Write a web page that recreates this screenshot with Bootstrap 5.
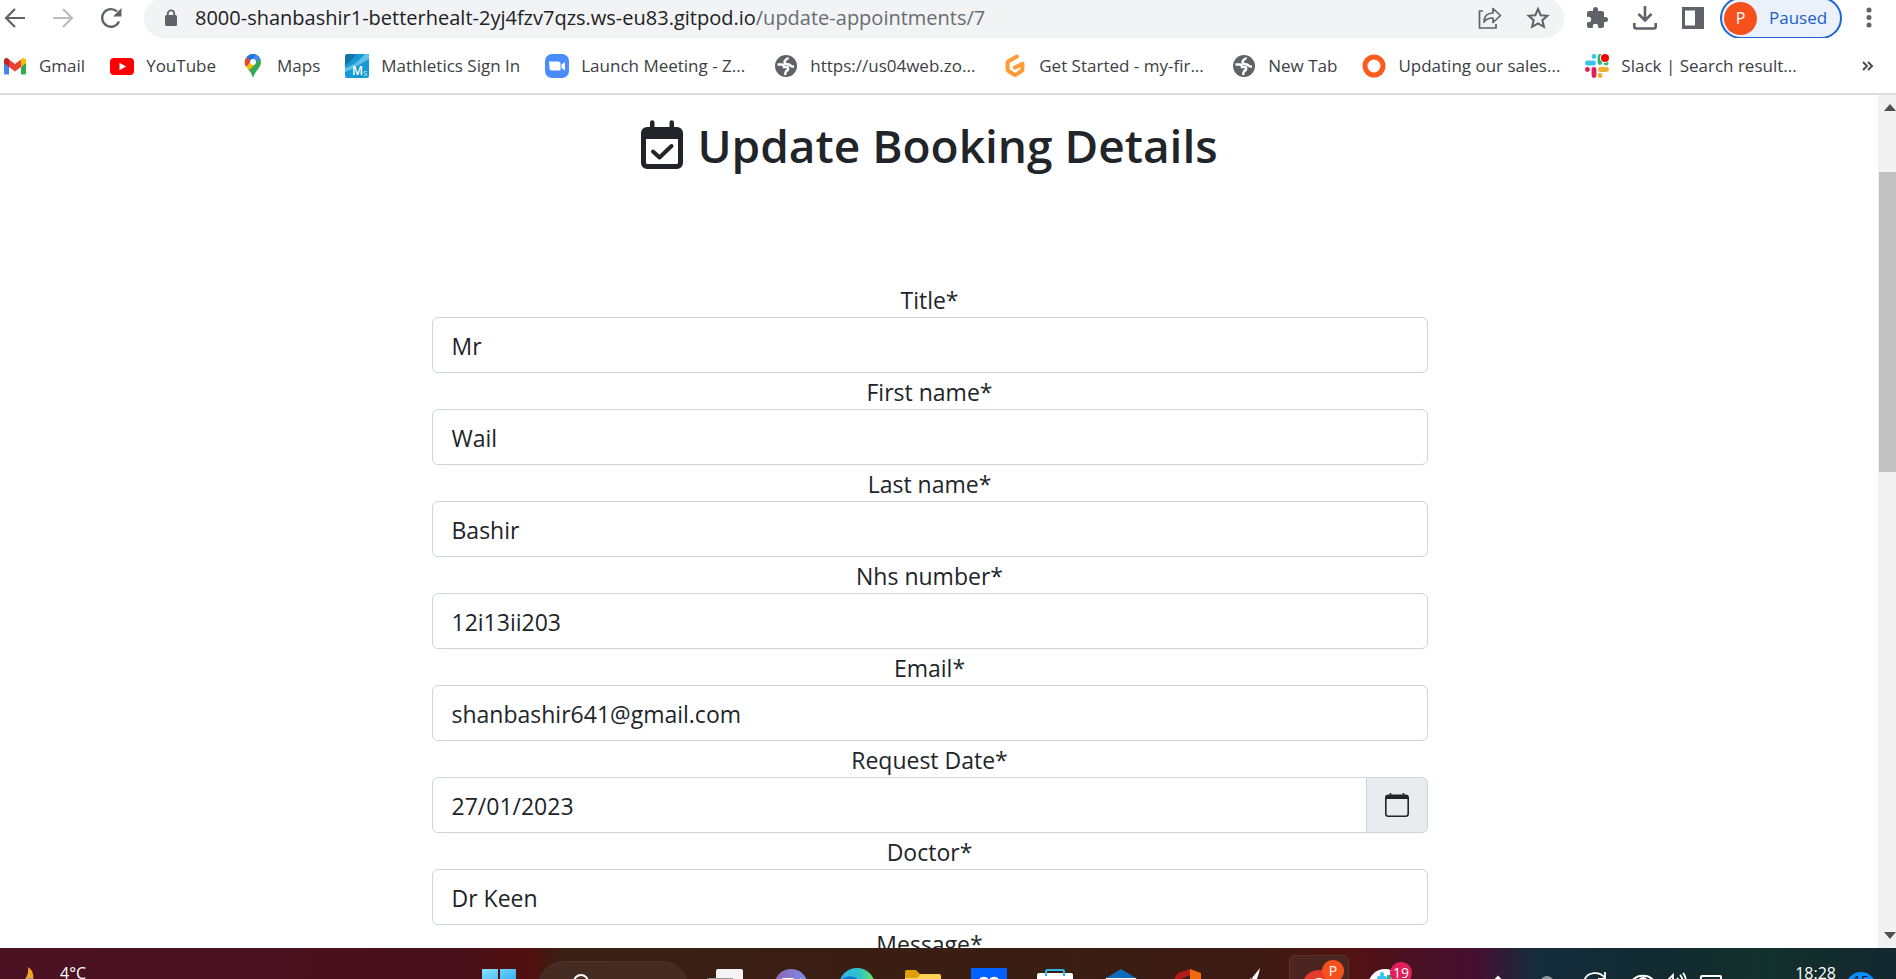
<!DOCTYPE html>
<html lang="en">
<head>
<meta charset="utf-8">
<meta name="viewport" content="width=device-width, initial-scale=1">
<title>Update Booking Details</title>
<link href="https://cdn.jsdelivr.net/npm/bootstrap@5.3.0/dist/css/bootstrap.min.css" rel="stylesheet">
<style>
  body { font-family: "Open Sans", "Noto Sans", sans-serif; color: #212529; background: #fff; }
  svg { display: block; flex: none; overflow: visible; }
  .icon-btn { border: 0; background: none; padding: 0; flex: none; color: #5f6368; }

  /* Browser toolbar, partly scrolled off the top edge */
  .toolbar { height: 38px; padding: 0 16px 0 3px; }
  .toolbar-row { height: 40px; }
  .nav-icons { gap: 24px; margin-right: 21px; }
  .omnibox { height: 40px; background: #f1f3f4; border-radius: 20px; padding: 0 14px 0 19px; font-size: 20px; }
  .omnibox .url { color: #202124; margin-left: 16px; white-space: nowrap; }
  .omnibox .url-path { color: #696c70; }
  .tool-icons { gap: 24px; margin: 0 15px 0 21px; }
  .profile { height: 42px; width: 122px; border: 2px solid #1b66d2; border-radius: 21px; background: #eaf1fb; color: #1a60c8; font-size: 17px; padding: 0 2px; }
  .profile-dot { width: 33px; height: 33px; border-radius: 50%; background: #f6511d; color: #fff; font-size: 16px; line-height: 33px; }

  .bookmarks { height: 55px; padding: 0 22px 0 3px; font-size: 17px; gap: 25px; }
  .bookmarks a { color: #3c4043; text-decoration: none; gap: 12px; white-space: nowrap; }
  .bookmarks .long-mark { min-width: 204px; }
  .divider { height: 2px; background: #dadce0; }

  /* Page area */
  .viewport { min-height: 0; }
  .page { padding-right: 19px; overflow: hidden; }
  .page h1 { font-size: 46px; font-weight: 600; line-height: 58px; margin: 21px 0 107px; gap: 14px; }
  .booking { width: 54%; max-width: 996px; margin: 0 auto; font-size: 23px; }
  .booking label { display: block; text-align: center; line-height: 34px; padding-top: 2px; }
  .booking .form-control { font-size: 23px; height: 56px; padding: 8px 19px 6px; border: 1px solid #ced4da; border-radius: 6px; color: #212529; }
  .booking .input-group-text { width: 62px; justify-content: center; background: #e9ecef; border: 1px solid #ced4da; border-radius: 6px; padding: 0; }

  .scroll { width: 18px; background: #f1f1f1; overflow: hidden; }
  .scroll-thumb { height: 300px; background: #c1c1c1; margin: 77px 0 auto 1px; }
  .scroll svg { position: absolute; left: 5px; }

  /* Taskbar */
  .taskbar { height: 31px; overflow: hidden; color: #fff; font-size: 16px;
    background: linear-gradient(90deg, #4a1222 0, #4a1220 15%, #47101a 24%, #521010 28%, #3a1f14 29.5%, #3a1e14 55%, #3d1b14 66%, #521312 71%, #48102a 76%, #451030 78%, #142c3b 81%, #122b30 88%, #12302b 93%, #142830 100%); }
  .side { flex: 1 0 0; }
  .weather { padding: 13px 0 0 8px; }
  .slot { width: 66px; padding-top: 20px; }
  .search-pill { width: 150px; height: 52px; margin: 13px 4px 0 6px; border: 1px solid #4d342a; background: #452c22; border-radius: 26px; color: #fff; padding: 11px 0 0 34px; font-size: 16px; gap: 9px; }
  .active-tile { width: 60px; height: 60px; margin: 7px 3px 0; padding-top: 13px; border-radius: 6px; background: #4b2520; border: 1px solid #583430; }
  .count { width: 22px; height: 22px; border-radius: 50%; line-height: 22px; text-align: center; font-size: 14px; position: absolute; }
  .count-profile { background: #f6511d; }
  .count-unread { background: #e01e5a; top: 14px; right: 6px; }
  .tray { padding: 24px 20px 0 0; }
  .clock { margin: -11px 10px 0 24px; line-height: 24px; }
  .notif { width: 30px; height: 30px; border-radius: 50%; background: #0a8dff; color: #04142a; text-align: center; font-size: 14px; line-height: 18px; }
</style>
</head>
<body class="vh-100 d-flex flex-column overflow-hidden">

<header>
  <div class="toolbar d-flex align-items-end overflow-hidden">
    <div class="toolbar-row d-flex align-items-center w-100">
      <div class="nav-icons d-flex">
        <button class="icon-btn" aria-label="Back"><svg width="24" height="24" viewBox="0 0 24 24" fill="none" stroke="#5f6368" stroke-width="2.2"><path d="M22 12H4M12 3l-9 9 9 9"/></svg></button>
        <button class="icon-btn" aria-label="Forward"><svg width="24" height="24" viewBox="0 0 24 24" fill="none" stroke="#babcbe" stroke-width="2.2"><path d="M2 12h18M12 3l9 9-9 9"/></svg></button>
        <button class="icon-btn" aria-label="Reload"><svg width="24" height="24" viewBox="0 0 24 24" fill="none" stroke="#5f6368" stroke-width="2.4"><path d="M20 15.500A8.800 8.800 0 1 1 18 5.500"/><path d="M22.500 2v8.500H14z" fill="#5f6368" stroke="none"/></svg></button>
      </div>
      <div class="omnibox d-flex align-items-center flex-grow-1">
        <svg width="16" height="18" viewBox="0 0 16 18"><rect x="2" y="6" width="12" height="11" rx="1.500" fill="#5f6368"/><path d="M4.800 7V4.600a3.200 3.200 0 0 1 6.400 0V7" fill="none" stroke="#5f6368" stroke-width="1.800"/></svg>
        <div class="url flex-grow-1" role="textbox" aria-label="Address">8000-shanbashir1-betterhealt-2yj4fzv7qzs.ws-eu83.gitpod.io<span class="url-path">/update-appointments/7</span></div>
        <div class="d-flex gap-4">
          <button class="icon-btn" aria-label="Share"><svg width="24" height="24" viewBox="0 0 24 24" fill="none" stroke="#5f6368" stroke-width="1.700"><path d="M5 5H1.500v17H18v-4"/><path d="M6 16c0-6 3-9 9-9V2.500l7.500 7-7.500 7V12c-4 0-7 1-9 4z" stroke-linejoin="round"/></svg></button>
          <button class="icon-btn" aria-label="Bookmark"><svg width="24" height="24" viewBox="0 0 24 24" fill="none" stroke="#5f6368" stroke-width="2"><path d="M12 3l2.700 6.200 6.700.6-5.100 4.400 1.600 6.600L12 17.300l-5.900 3.500 1.600-6.600L2.600 9.800l6.700-.6z"/></svg></button>
        </div>
      </div>
      <div class="tool-icons d-flex">
        <button class="icon-btn" aria-label="Extensions"><svg width="24" height="24" viewBox="0 0 24 24" fill="#5f6368"><path d="M20.500 11H19V7c0-1.100-.9-2-2-2h-4V3.500a2.500 2.500 0 0 0-5 0V5H4c-1.100 0-2 .9-2 2v3.800h1.500a2.700 2.700 0 0 1 0 5.400H2V20c0 1.100.9 2 2 2h3.800v-1.500a2.700 2.700 0 0 1 5.400 0V22H17c1.100 0 2-.9 2-2v-4h1.500a2.500 2.500 0 0 0 0-5z"/></svg></button>
        <button class="icon-btn" aria-label="Downloads"><svg width="24" height="24" viewBox="0 0 24 24" fill="none" stroke="#5f6368" stroke-width="2.600"><path d="M12 0v14M5.500 8l6.500 6.500L18.500 8M1.300 17v3.500a2 2 0 0 0 2 2h17.400a2 2 0 0 0 2-2V17"/></svg></button>
        <button class="icon-btn" aria-label="Side panel"><svg width="24" height="24" viewBox="0 0 24 24"><path fill="#5f6368" fill-rule="evenodd" d="M1 1h22v22H1zM4 4.500v15h10v-15z"/></svg></button>
      </div>
      <button class="profile d-flex align-items-center flex-shrink-0"><span class="profile-dot">P</span><span class="ms-2 ps-1">Paused</span></button>
      <button class="icon-btn ms-3" aria-label="Menu"><svg width="22" height="24" viewBox="0 0 22 24" fill="#5f6368"><circle cx="11" cy="4" r="2.500"/><circle cx="11" cy="11.500" r="2.500"/><circle cx="11" cy="19" r="2.500"/></svg></button>
    </div>
  </div>

  <nav class="bookmarks d-flex align-items-center" aria-label="Bookmarks">
    <a href="#" class="d-flex align-items-center"><svg width="24" height="24" viewBox="0 0 24 24"><path fill="#4285f4" d="M1 6v13a1.500 1.500 0 0 0 1.500 1.500H6V9z"/><path fill="#34a853" d="M18 9v11.500h3.500A1.500 1.500 0 0 0 23 19V6z"/><path fill="#ea4335" d="M6 5.500l6 4.500 6-4.500V13l-6 4.500L6 13z"/><path fill="#c5221f" d="M1 6.500C1 4 3.700 3.400 5.500 4.800L6 5.200V13l-5-4z"/><path fill="#fbbc04" d="M23 6.500c0-2.500-2.700-3.100-4.500-1.700l-.5.400V13l5-4z"/></svg>Gmail</a>
    <a href="#" class="d-flex align-items-center"><svg width="24" height="24" viewBox="0 0 24 24"><rect y="4" width="24" height="17" rx="4" fill="#f00"/><path d="M9.500 8.700v7.600l6.500-3.800z" fill="#fff"/></svg>YouTube</a>
    <a href="#" class="d-flex align-items-center"><svg width="24" height="24" viewBox="0 0 24 24"><path fill="#34a853" d="M4 8a8 8 0 1 1 16 0c0 6-5.500 8-8 16-1.500-5-3-6.500-5-9z"/><path fill="#fbbc04" d="M5.500 12.500L9 8l5 2.500-6.500 6z"/><path fill="#4285f4" d="M10 .3a8 8 0 0 1 9 4.200L13.500 9.500 9 6z"/><path fill="#ea4335" d="M5.800 3L10 7l-5 6A8 8 0 0 1 5.800 3z"/><path fill="#1a73e8" d="M5.800 3A8 8 0 0 1 14.500.4L9.800 6.500z"/><circle cx="12" cy="8" r="3" fill="#fff"/></svg>Maps</a>
    <a href="#" class="d-flex align-items-center"><svg width="24" height="24" viewBox="0 0 24 24"><rect width="24" height="24" rx="2" fill="#1799d3"/><path d="M0 2L2 0h9C8 5 4 9 0 11z" fill="#1375a8"/><path d="M0 14C8 12 15 6 20 0h4v5C16 9 8 16 0 18z" fill="#61bfe8"/><text x="7" y="21" font-size="12" font-weight="600" fill="#fff">M</text><text x="18" y="22" font-size="9" fill="#c9efff">s</text></svg>Mathletics Sign In</a>
    <a href="#" class="long-mark d-flex align-items-center"><svg width="24" height="24" viewBox="0 0 24 24"><rect width="24" height="24" rx="7" fill="#4a8cff"/><path d="M4 7.500h9a2.500 2.500 0 0 1 2.500 2.500v6.500H7A2.500 2.500 0 0 1 4.500 14zM16.500 10.500L20 8v8.500L16.500 14z" fill="#fff"/></svg>Launch Meeting - Z...</a>
    <a href="#" class="long-mark d-flex align-items-center"><svg width="24" height="24" viewBox="0 0 24 24"><circle cx="12" cy="12" r="11" fill="#5f6368"/><path d="M3.500 10.500h4c2 0 2.500 1 2.500 2.500h3c1.500 0 1.500 3 0 3.500s-1.500 2-2 4.500M14 3.500c0 2-3.500 1.500-3.500 4.500 0 2.500 2.500 2 4.500 2.500s1.500 2.500 5 2" fill="none" stroke="#fff" stroke-width="2.500"/></svg>https://us04web.zo...</a>
    <a href="#" class="long-mark d-flex align-items-center"><svg width="24" height="24" viewBox="0 0 24 24"><path d="M14 2.500L5.500 7.300a2 2 0 0 0-1 1.700v6.300a2 2 0 0 0 1 1.700l5.500 3.600a2 2 0 0 0 2 0l5.500-3.600a2 2 0 0 0 1-1.700V9.800L12 13.500" fill="none" stroke="#ff9a34" stroke-width="4" stroke-linecap="round" stroke-linejoin="round"/></svg>Get Started - my-fir...</a>
    <a href="#" class="d-flex align-items-center"><svg width="24" height="24" viewBox="0 0 24 24"><circle cx="12" cy="12" r="11" fill="#5f6368"/><path d="M3.500 10.500h4c2 0 2.500 1 2.500 2.500h3c1.500 0 1.500 3 0 3.500s-1.500 2-2 4.500M14 3.500c0 2-3.500 1.500-3.500 4.500 0 2.500 2.500 2 4.500 2.500s1.500 2.500 5 2" fill="none" stroke="#fff" stroke-width="2.500"/></svg>New Tab</a>
    <a href="#" class="d-flex align-items-center"><svg width="24" height="24" viewBox="0 0 24 24"><circle cx="12" cy="12" r="9" fill="none" stroke="#fc5a1f" stroke-width="5"/></svg>Updating our sales...</a>
    <a href="#" class="d-flex align-items-center"><svg width="24" height="24" viewBox="0 0 24 24" stroke-width="4.800" stroke-linecap="round" fill="none"><path stroke="#36c5f0" d="M2.400 9h6.200M9 2.400v.1"/><path stroke="#2eb67d" d="M15 2.400v6.200M21 9h.1"/><path stroke="#ecb22e" d="M15.400 15.500h6.200M15 21.600v-.1"/><path stroke="#e01e5a" d="M9 15.500v6.100M2.400 15.500h.1"/><circle cx="20" cy="4" r="5" fill="#fff" stroke="none"/><circle cx="20" cy="4" r="4" fill="#f00" stroke="none"/></svg>Slack | Search result...</a>
    <button class="icon-btn ms-auto" aria-label="More bookmarks"><svg width="12" height="12" viewBox="0 0 12 12" fill="none" stroke="#4a4d51" stroke-width="2"><path d="M1 2l4 4-4 4M6 2l4 4-4 4"/></svg></button>
  </nav>
  <div class="divider"></div>
</header>

<div class="viewport d-flex flex-grow-1">
  <main class="page flex-grow-1">
    <h1 class="d-flex justify-content-center align-items-center"><svg width="42" height="48" viewBox="0 0 42 48"><path fill="#212529" fill-rule="evenodd" d="M9 1.500a2 2 0 0 1 4.500 0V6h15V1.500a2 2 0 0 1 4.500 0V6h3a6 6 0 0 1 6 6v30a6 6 0 0 1-6 6H6a6 6 0 0 1-6-6V12a6 6 0 0 1 6-6h3zM5 18v23.500A1.500 1.500 0 0 0 6.500 43h29a1.500 1.500 0 0 0 1.500-1.500V18z"/><path d="M12 30.500l6.500 6L30.500 25" fill="none" stroke="#212529" stroke-width="4" stroke-linecap="round" stroke-linejoin="round"/></svg>Update Booking Details</h1>
    <form class="booking">
      <div><label for="f-title">Title*</label><input id="f-title" class="form-control" value="Mr"></div>
      <div><label for="f-first">First name*</label><input id="f-first" class="form-control" value="Wail"></div>
      <div><label for="f-last">Last name*</label><input id="f-last" class="form-control" value="Bashir"></div>
      <div><label for="f-nhs">Nhs number*</label><input id="f-nhs" class="form-control" value="12i13ii203"></div>
      <div><label for="f-email">Email*</label><input id="f-email" class="form-control" type="email" value="shanbashir641@gmail.com"></div>
      <div><label for="f-date">Request Date*</label>
        <div class="input-group"><input id="f-date" class="form-control" value="27/01/2023"><button type="button" class="input-group-text" aria-label="Open calendar"><svg width="24" height="24" viewBox="0 0 24 24"><path d="M5.500 0v3M18.500 0v3" stroke="#212529" stroke-width="1.500"/><rect x=".8" y="2.300" width="22.400" height="20.900" rx="2.500" fill="none" stroke="#212529" stroke-width="1.600"/><path d="M1 3h22v3H1z" fill="#212529"/></svg></button></div></div>
      <div><label for="f-doctor">Doctor*</label><input id="f-doctor" class="form-control" value="Dr Keen"></div>
      <div><label for="f-message">Message*</label><textarea id="f-message" class="form-control"></textarea></div>
    </form>
  </main>
  <div class="scroll position-relative flex-shrink-0" aria-hidden="true">
    <svg class="top-0 mt-2" width="14" height="8" viewBox="0 0 14 8"><path d="M1 8l6-7 6 7z" fill="#505050"/></svg>
    <div class="scroll-thumb"></div>
    <svg class="bottom-0 mb-2" width="14" height="8" viewBox="0 0 14 8"><path d="M1 0l6 7 6-7z" fill="#505050"/></svg>
  </div>
</div>

<footer class="taskbar d-flex flex-shrink-0 align-items-start">
  <div class="side d-flex ps-3">
    <svg class="mt-3" width="36" height="30" viewBox="0 0 36 30"><path d="M12 3c6 4 7 11 3 18H0c9-3 13-9 12-18z" fill="#f5a623"/><circle cx="14" cy="19" r="5" fill="#5c8fd6"/></svg>
    <span class="weather">4°C</span>
  </div>
  <div class="d-flex align-items-start pe-2">
    <div class="slot d-flex justify-content-center"><svg width="36" height="36" viewBox="0 0 36 36"><defs><linearGradient id="win" x2="1" y2="1"><stop stop-color="#8fe0ff"/><stop offset="1" stop-color="#1fa8f0"/></linearGradient></defs><path fill="url(#win)" d="M1 2a1 1 0 0 1 1-1h15v16H1zM19 1h15a1 1 0 0 1 1 1v15H19z"/></svg></div>
    <button class="search-pill d-flex align-items-start"><svg width="18" height="18" viewBox="0 0 18 18"><circle cx="8" cy="9" r="7" fill="none" stroke="#fff" stroke-width="2"/></svg><span>Search</span></button>
    <div class="slot d-flex justify-content-center"><svg width="36" height="36" viewBox="0 0 36 36"><rect x="0" y="10" width="26" height="20" fill="#6d6a69"/><path d="M9 3a2 2 0 0 1 2-2h23a2 2 0 0 1 2 2v20H9z" fill="#f4f2f2"/><path d="M2 10h24v14H2z" fill="#9b9998"/></svg></div>
    <div class="slot d-flex justify-content-center"><svg width="36" height="36" viewBox="0 0 36 36"><defs><linearGradient id="chat"><stop stop-color="#8f63b5"/><stop offset="1" stop-color="#7b90e8"/></linearGradient></defs><circle cx="18" cy="18" r="17" fill="url(#chat)"/><rect x="8" y="10" width="14" height="14" rx="3" fill="#fff"/><path d="M23 14l5-4v14z" fill="#fff"/></svg></div>
    <div class="slot d-flex justify-content-center"><svg width="36" height="36" viewBox="0 0 36 36"><defs><linearGradient id="edge"><stop offset=".2" stop-color="#30b8e8"/><stop offset=".6" stop-color="#2cc5c4"/><stop offset="1" stop-color="#72e64c"/></linearGradient></defs><circle cx="18" cy="18" r="18" fill="url(#edge)"/><path d="M0 16C3 6 17 6 21 14l-4 20z" fill="#087ccb"/></svg></div>
    <div class="slot d-flex justify-content-center"><svg width="36" height="36" viewBox="0 0 36 36"><path d="M0 4a2 2 0 0 1 2-2h9l4 4h19v10H0z" fill="#e0a005"/><path d="M0 10h12l4-4h18a2 2 0 0 1 2 2v20H0z" fill="#ffd150"/></svg></div>
    <div class="slot d-flex justify-content-center"><svg width="36" height="36" viewBox="0 0 36 36"><path d="M0 0h36v36H0z" fill="#0061fe"/><path d="M7 16c0-9 9-9 11-4 2-5 11-5 11 4z" fill="#fff"/></svg></div>
    <div class="slot d-flex justify-content-center"><svg width="36" height="36" viewBox="0 0 36 36"><rect y="5" width="36" height="30" rx="2" fill="#fff"/><path d="M9 8V3.500A1.500 1.500 0 0 1 10.500 2h15A1.500 1.500 0 0 1 27 3.500V8" fill="none" stroke="#31b5e8" stroke-width="2"/></svg></div>
    <div class="slot d-flex justify-content-center"><svg width="36" height="36" viewBox="0 0 36 36"><path d="M0 12L18 1l18 11v10H0z" fill="#0f6cbd"/><path d="M3 10h30v12H3z" fill="#fff"/></svg></div>
    <div class="slot d-flex justify-content-center"><svg width="36" height="36" viewBox="0 0 36 36"><path d="M4 12L9 5l12-4v6l-9 4v12H4z" fill="#b31b1b"/><path d="M21 1l11 4v18H21z" fill="#f06a0c"/></svg></div>
    <div class="slot d-flex justify-content-center"><svg width="36" height="36" viewBox="0 0 36 36"><path d="M25 0c-1 5-2 9-5 15l-3-5zM16 10l3 6H8z" fill="#fff"/></svg></div>
    <div class="active-tile d-flex justify-content-center position-relative"><svg width="36" height="36" viewBox="0 0 36 36"><circle cx="18" cy="18" r="17" fill="#e33b2e"/><path d="M3 10l8 14L3 26z" fill="#2aa84a"/><circle cx="18" cy="18" r="9" fill="#fff"/><circle cx="18" cy="18" r="7" fill="#3b7ded"/></svg><span class="count count-profile top-0 end-0 mt-1 me-1">P</span></div>
    <div class="slot d-flex justify-content-center position-relative"><svg width="36" height="36" viewBox="0 0 36 36"><circle cx="18" cy="18" r="17" fill="#fff"/><path d="M12 10h6M15 6v1" stroke="#36c5f0" stroke-width="4" stroke-linecap="round"/><path d="M22 7v8" stroke="#2eb67d" stroke-width="4"/></svg><span class="count count-unread">19</span></div>
  </div>
  <div class="side tray d-flex justify-content-end align-items-start">
    <svg class="me-4 mt-1" width="24" height="12" viewBox="0 0 24 12"><path d="M4 8l7-7 7 7" fill="none" stroke="#fff" stroke-width="2"/></svg>
    <svg class="me-4" width="24" height="12" viewBox="0 0 24 12"><circle cx="12" cy="11" r="7" fill="#8d979c"/></svg>
    <svg class="me-4" width="24" height="20" viewBox="0 0 24 20"><path d="M1 9C4-1 17-1 22 6M22 0v7h-7" fill="none" stroke="#fff" stroke-width="1.800"/></svg>
    <svg class="me-2" width="24" height="12" viewBox="0 0 24 12"><path d="M1 9C6 2 18 2 23 9" fill="none" stroke="#fff" stroke-width="2"/><circle cx="12" cy="10" r="4" fill="none" stroke="#fff" stroke-width="2"/></svg>
    <svg class="me-2" width="24" height="12" viewBox="0 0 24 12"><path d="M1 8h4l5-5v8M14 6c1 1 2 3 2 5M17 3c2 2 3 5 3 8M20 1c3 3 3 7 3 10" fill="none" stroke="#fff" stroke-width="1.800"/></svg>
    <svg class="me-5 ms-1" width="24" height="12" viewBox="0 0 24 12"><path d="M2 12V5a1 1 0 0 1 1-1h18a1 1 0 0 1 1 1v7M6 8h12" fill="none" stroke="#fff" stroke-width="2"/></svg>
    <span class="clock">18:28</span>
    <span class="notif">15</span>
  </div>
</footer>
<script src="https://cdn.jsdelivr.net/npm/bootstrap@5.3.0/dist/js/bootstrap.bundle.min.js"></script>
</body>
</html>
